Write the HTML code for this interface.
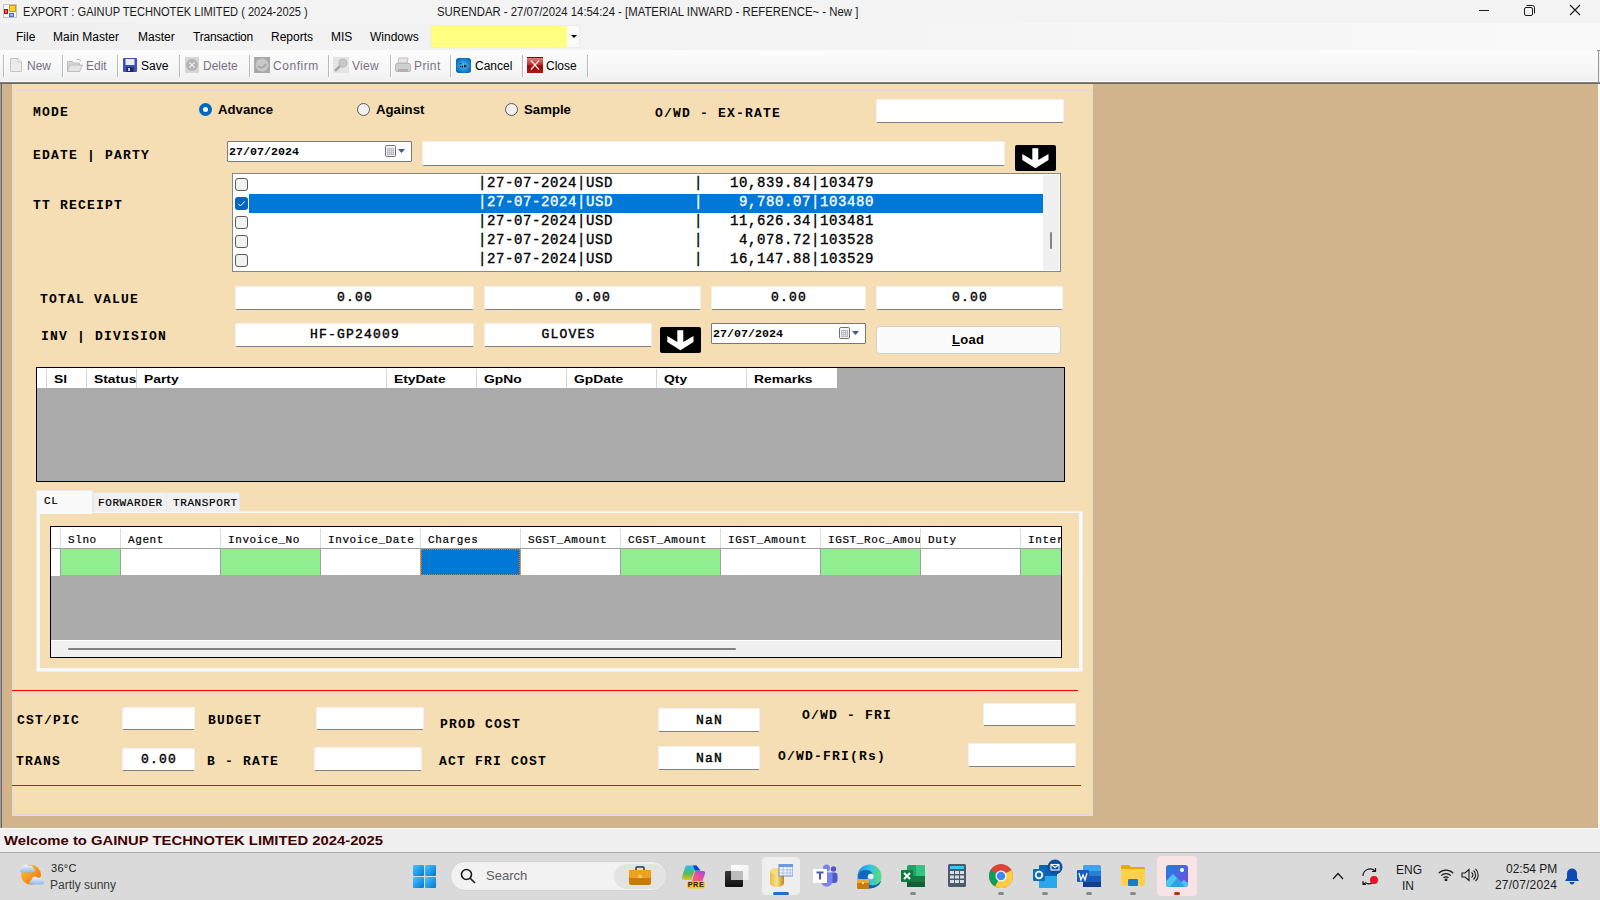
<!DOCTYPE html>
<html><head><meta charset="utf-8">
<style>
*{box-sizing:border-box}
html,body{margin:0;padding:0}
body{width:1600px;height:900px;overflow:hidden;position:relative;background:#f0f0f0;font-family:"Liberation Sans",sans-serif;color:#000}
.a{position:absolute}
.s12{font:12px/12px "Liberation Sans",sans-serif;white-space:pre}
.cm{font:bold 13px/15px "Liberation Mono",monospace;letter-spacing:1.2px;white-space:pre;color:#000}
.lr{font:normal 14px/15px "Liberation Mono",monospace;letter-spacing:0.6px;-webkit-text-stroke:0.35px currentColor;white-space:pre}
.tv{font:normal 13px/15px "Liberation Mono",monospace;letter-spacing:1.2px;-webkit-text-stroke:0.4px #000;white-space:pre;color:#000;padding-left:1.2px}
.cm12{font:normal 11px/12px "Liberation Mono",monospace;letter-spacing:0.6px;-webkit-text-stroke:0.2px #000;white-space:pre;color:#000}
.dt{font:bold 11.67px/12px "Liberation Mono",monospace;white-space:pre;color:#000}
.tb{position:absolute;background:#fff;border-top:1px solid #eef0f4;border-left:1px solid #eef0f4;border-right:1px solid #eef0f4;border-bottom:1px solid #808080;border-radius:2px}
.sep{position:absolute;top:55px;width:1px;height:22px;background:#b9b9b9;box-shadow:1px 0 0 #fff}
.gh{font:bold 11px/12px "Liberation Sans",sans-serif;transform:scaleX(1.26);transform-origin:0 0;white-space:pre}
.vl{position:absolute;width:1px;background:#d5d5d5}
.rl{font:bold 12px/12px "Liberation Sans",sans-serif;transform:scaleX(1.1);transform-origin:0 0;white-space:pre}
.chk{position:absolute;left:235px;width:13px;height:13px;border:1px solid #5a5a5a;border-radius:3px;background:#f1f1f1}
</style></head><body>

<!-- TITLE BAR -->
<div class="a" style="left:0;top:0;width:1600px;height:23px;background:#f3f3f3"></div>
<svg class="a" style="left:3px;top:4px" width="14" height="14" viewBox="0 0 14 14">
<rect x="0.5" y="0.5" width="13" height="13" fill="#f6f6f6" stroke="#c4c4c4"/>
<rect x="6" y="1" width="7" height="7" fill="#c89a10"/><rect x="7" y="2" width="5" height="5" fill="#ffd23a"/>
<rect x="1" y="5" width="4" height="5" fill="#b01010"/><rect x="2" y="6" width="2" height="3" fill="#f06060"/>
<rect x="6" y="9" width="5" height="4" fill="#3a72d8"/><rect x="7" y="10" width="3" height="2" fill="#90b8ff"/>
</svg>
<div class="a s12" style="left:23px;top:6px;transform:scaleX(0.925);transform-origin:0 0;color:#1a1a1a">EXPORT : GAINUP TECHNOTEK LIMITED ( 2024-2025 )</div>
<div class="a s12" style="left:437px;top:6px;transform:scaleX(0.946);transform-origin:0 0;color:#1a1a1a">SURENDAR - 27/07/2024 14:54:24 - [MATERIAL INWARD - REFERENCE~ - New ]</div>
<div class="a" style="left:1479px;top:10px;width:10px;height:1px;background:#1a1a1a"></div>
<svg class="a" style="left:1523px;top:4px" width="13" height="13" viewBox="0 0 13 13" fill="none" stroke="#1a1a1a" stroke-width="1">
<rect x="1.5" y="3.5" width="8" height="8" rx="1.5"/>
<path d="M3.5 1.5h6a2 2 0 0 1 2 2v6"/>
</svg>
<svg class="a" style="left:1569px;top:4px" width="12" height="12" viewBox="0 0 12 12" stroke="#1a1a1a" stroke-width="1.1">
<path d="M1 1L11 11M11 1L1 11"/>
</svg>

<!-- MENU BAR -->
<div class="a" style="left:0;top:23px;width:1600px;height:27px;background:linear-gradient(90deg,#f0f0f0 0%,#f3f3f3 40%,#f9f9f9 100%)"></div>
<div class="a s12" style="left:16px;top:31px;color:#000">File</div>
<div class="a s12" style="left:53px;top:31px;color:#000">Main Master</div>
<div class="a s12" style="left:138px;top:31px;color:#000">Master</div>
<div class="a s12" style="left:193px;top:31px;letter-spacing:-0.2px;color:#000">Transaction</div>
<div class="a s12" style="left:271px;top:31px;color:#000">Reports</div>
<div class="a s12" style="left:331px;top:31px;color:#000">MIS</div>
<div class="a s12" style="left:370px;top:31px;color:#000">Windows</div>
<div class="a" style="left:430px;top:25px;width:150px;height:23px;background:#fafafa;border:1px solid #ededed"></div>
<div class="a" style="left:431px;top:26px;width:136px;height:21px;background:#ffff80"></div>
<div class="a" style="left:571px;top:35px;width:0;height:0;border-left:3px solid transparent;border-right:3px solid transparent;border-top:3px solid #000"></div>

<!-- TOOLBAR -->
<div class="a" style="left:0;top:50px;width:1598px;height:32px;background:linear-gradient(180deg,#fcfcfc 0%,#f6f6f6 60%,#efefef 100%);border-radius:0 2px 0 0"></div>
<div class="a" style="left:0;top:81px;width:1600px;height:1px;background:#fafafa"></div>
<div class="a" style="left:0;top:82px;width:1600px;height:2px;background:linear-gradient(180deg,#8a8a8a,#5c5c5c)"></div>
<div class="sep" style="left:3px"></div>
<div class="sep" style="left:62px"></div>
<div class="sep" style="left:117px"></div>
<div class="sep" style="left:179px"></div>
<div class="sep" style="left:249px"></div>
<div class="sep" style="left:328px"></div>
<div class="sep" style="left:390px"></div>
<div class="sep" style="left:450px"></div>
<div class="sep" style="left:522px"></div>
<div class="sep" style="left:587px"></div>
<!-- icons -->
<svg class="a" style="left:10px;top:58px" width="12" height="14" viewBox="0 0 12 14"><path d="M0.5 0.5h7.5l3.5 3.5v9.5h-11z" fill="#ececec" stroke="#c4c4c4"/><path d="M8 0.5v3.5h3.5" fill="#f8f8f8" stroke="#c4c4c4"/></svg>
<div class="a s12" style="left:27px;top:60px;color:#7a7186">New</div>
<svg class="a" style="left:67px;top:58px" width="16" height="14" viewBox="0 0 16 14"><path d="M0.5 3.5h5l1 1.5h6v8.5h-12z" fill="#d8d8d8" stroke="#bdbdbd"/><path d="M2.5 7h13l-3 6.5h-12z" fill="#e4e4e4" stroke="#bdbdbd"/><path d="M10 1.5q3-1 4 2" stroke="#bdbdbd" fill="none"/></svg>
<div class="a s12" style="left:86px;top:60px;color:#7a7186">Edit</div>
<svg class="a" style="left:123px;top:58px" width="14" height="14" viewBox="0 0 14 14"><rect x="0" y="0" width="14" height="14" rx="1" fill="#3e4fb8"/><rect x="2.5" y="1" width="9" height="6" fill="#e8ecff"/><rect x="3.5" y="9" width="7" height="5" fill="#20286a"/><rect x="5" y="10" width="2" height="3" fill="#c8d0ff"/></svg>
<div class="a s12" style="left:141px;top:60px;color:#000">Save</div>
<svg class="a" style="left:185px;top:57px" width="14" height="16" viewBox="0 0 14 16"><rect x="0" y="0" width="14" height="16" fill="#d6d6d6"/><circle cx="7" cy="8" r="6" fill="#b4b4b4"/><path d="M4.5 5.5l5 5M9.5 5.5l-5 5" stroke="#eee" stroke-width="1.2"/></svg>
<div class="a s12" style="left:203px;top:60px;color:#7a7186">Delete</div>
<svg class="a" style="left:254px;top:57px" width="16" height="16" viewBox="0 0 16 16"><rect x="0" y="0" width="16" height="16" fill="#a8a8a8"/><circle cx="8" cy="8" r="6.5" fill="#c8c8c8"/><path d="M4 9q4 4 8-2" stroke="#a0a0a0" fill="none" stroke-width="1.5"/></svg>
<div class="a s12" style="left:273px;top:60px;letter-spacing:0.55px;color:#7a7186">Confirm</div>
<svg class="a" style="left:333px;top:57px" width="16" height="16" viewBox="0 0 16 16"><rect x="0" y="0" width="16" height="16" fill="#e4e4e4"/><circle cx="10" cy="6" r="4" fill="#c8c8c8" stroke="#b8b8b8"/><path d="M7 9l-5 5" stroke="#a8a8a8" stroke-width="2.5"/></svg>
<div class="a s12" style="left:352px;top:60px;letter-spacing:0.3px;color:#7a7186">View</div>
<svg class="a" style="left:395px;top:57px" width="16" height="16" viewBox="0 0 16 16"><path d="M4 1h9l-1 5H3z" fill="#e6e6e6" stroke="#c0c0c0"/><rect x="0.5" y="6.5" width="15" height="8" rx="1.5" fill="#cfcfcf" stroke="#b8b8b8"/><rect x="3" y="12" width="10" height="3" fill="#b0b0b0"/></svg>
<div class="a s12" style="left:414px;top:60px;letter-spacing:0.4px;color:#7a7186">Print</div>
<svg class="a" style="left:456px;top:58px" width="15" height="15" viewBox="0 0 15 15"><defs><radialGradient id="cg" cx="0.5" cy="0.5" r="0.6"><stop offset="0" stop-color="#4cc0f8"/><stop offset="1" stop-color="#0062b8"/></radialGradient></defs><rect x="0" y="0" width="15" height="15" rx="3" fill="url(#cg)"/><rect x="4" y="5" width="1.2" height="1.2" fill="#111"/><rect x="4" y="8" width="1.2" height="1.2" fill="#111"/><rect x="6" y="7.5" width="1" height="2" fill="#111"/><path d="M8 6.5L11 8L8 9.5z" fill="#111"/></svg>
<div class="a s12" style="left:475px;top:60px;color:#000">Cancel</div>
<svg class="a" style="left:527px;top:57px" width="16" height="16" viewBox="0 0 16 16"><defs><linearGradient id="xg" x1="0" y1="0" x2="0" y2="1"><stop offset="0" stop-color="#e88a8a"/><stop offset="0.5" stop-color="#c02828"/><stop offset="0.55" stop-color="#980808"/><stop offset="1" stop-color="#b01818"/></linearGradient></defs><rect x="0" y="0" width="16" height="16" fill="url(#xg)"/><rect x="0" y="0" width="16" height="1" fill="#5a1010"/><path d="M4 3.5l8 9M12 3.5l-8 9" stroke="#f2e6e6" stroke-width="1.3"/></svg>
<div class="a s12" style="left:546px;top:60px;color:#000">Close</div>

<!-- MDI AREA -->
<div class="a" style="left:0;top:84px;width:1600px;height:744px;background:#d2b48c"></div>
<div class="a" style="left:0;top:84px;width:1px;height:744px;background:#a0a0a0"></div>
<div class="a" style="left:1px;top:84px;width:1px;height:744px;background:#646464"></div>
<div class="a" style="left:1598px;top:84px;width:2px;height:744px;background:#fbfbfb"></div>
<div class="a" style="left:1598px;top:50px;width:1px;height:33px;background:#9a9a9a"></div>
<div class="a" style="left:1597px;top:50px;width:3px;height:1px;background:#8a8a8a"></div>
<div class="a" style="left:12px;top:84px;width:1081px;height:732px;background:#f5deb3"></div>
<div class="a" style="left:12px;top:90px;width:1081px;height:725px;border:1px solid #dcdcdc"></div>

<!-- FORM -->
<div class="a cm" style="left:33px;top:105px;">MODE</div>
<div class="a" style="left:199px;top:103px;width:13px;height:13px;border-radius:50%;background:#0067c0"></div>
<div class="a" style="left:203px;top:107px;width:5px;height:5px;border-radius:50%;background:#fff"></div>
<div class="a rl" style="left:218px;top:104px">Advance</div>
<div class="a" style="left:357px;top:103px;width:13px;height:13px;border-radius:50%;background:#f1f1f1;border:1px solid #5a5a5a"></div>
<div class="a rl" style="left:376px;top:104px">Against</div>
<div class="a" style="left:505px;top:103px;width:13px;height:13px;border-radius:50%;background:#f1f1f1;border:1px solid #5a5a5a"></div>
<div class="a rl" style="left:524px;top:104px">Sample</div>
<div class="a cm" style="left:655px;top:106px;">O/WD - EX-RATE</div>
<div class="tb" style="left:876px;top:99px;width:188px;height:24px;"></div>
<div class="a cm" style="left:33px;top:148px;">EDATE | PARTY</div>
<div class="a" style="left:227px;top:141px;width:185px;height:21px;border:1px solid #7a7a7a;background:#fff;border-radius:1px"></div>
<div class="a dt" style="left:229px;top:146px">27/07/2024</div>
<svg class="a" style="left:385px;top:145px" width="22" height="12" viewBox="0 0 22 12"><rect x="0.5" y="0.5" width="10" height="11" rx="1.2" fill="#f0f4fc" stroke="#786c6c"/><rect x="2" y="3" width="7" height="7" fill="#b6bac2"/><g fill="#fff"><rect x="2.8" y="3.8" width="1" height="1"/><rect x="4.8" y="3.8" width="1" height="1"/><rect x="6.8" y="3.8" width="1" height="1"/><rect x="2.8" y="5.8" width="1" height="1"/><rect x="4.8" y="5.8" width="1" height="1"/><rect x="6.8" y="5.8" width="1" height="1"/><rect x="2.8" y="7.8" width="1" height="1"/><rect x="4.8" y="7.8" width="1" height="1"/><rect x="6.8" y="7.8" width="1" height="1"/></g><path d="M13 4h7l-3.5 4z" fill="#3c5a8a"/></svg>
<div class="tb" style="left:422px;top:141px;width:583px;height:25px;"></div>
<div class="a" style="left:1015px;top:145px;width:41px;height:26px;background:#000;border-radius:2px"></div>
<svg class="a" style="left:1015px;top:145px" width="41" height="26" viewBox="0 0 41 26"><path d="M17.3 3.3H23.3V15L33.5 9V15L20.4 23.2L7.3 15V9L17.3 15Z" fill="#fff"/></svg>
<div class="a cm" style="left:33px;top:198px;">TT RECEIPT</div>
<div class="a" style="left:232px;top:173px;width:829px;height:99px;border:1px solid #828790;background:#fff"></div>
<div class="a" style="left:1043px;top:175px;width:16px;height:95px;background:#f0f0f0"></div>
<div class="a" style="left:1050px;top:232px;width:2px;height:17px;background:#858585;border-radius:1px"></div>
<div class="a" style="left:249px;top:194px;width:794px;height:19px;background:#0078d7"></div>
<div class="chk" style="top:178px"></div>
<div class="a lr" style="left:478px;top:176px;color:#000">|27-07-2024|USD         |   10,839.84|103479</div>
<div class="a" style="left:235px;top:197px;width:13px;height:13px;border-radius:3px;background:#0067c0"></div>
<svg class="a" style="left:235px;top:197px" width="13" height="13" viewBox="0 0 13 13"><path d="M3.2 6.8l2.2 2.2 4.4-4.6" stroke="#fff" stroke-width="1" fill="none"/></svg>
<div class="a lr" style="left:478px;top:195px;color:#fff">|27-07-2024|USD         |    9,780.07|103480</div>
<div class="chk" style="top:216px"></div>
<div class="a lr" style="left:478px;top:214px;color:#000">|27-07-2024|USD         |   11,626.34|103481</div>
<div class="chk" style="top:235px"></div>
<div class="a lr" style="left:478px;top:233px;color:#000">|27-07-2024|USD         |    4,078.72|103528</div>
<div class="chk" style="top:254px"></div>
<div class="a lr" style="left:478px;top:252px;color:#000">|27-07-2024|USD         |   16,147.88|103529</div>
<div class="a cm" style="left:40px;top:292px;">TOTAL VALUE</div>
<div class="tb" style="left:235px;top:286px;width:239px;height:24px;"></div>
<div class="a tv" style="left:235px;width:239px;text-align:center;top:290px">0.00</div>
<div class="tb" style="left:484px;top:286px;width:217px;height:24px;"></div>
<div class="a tv" style="left:484px;width:217px;text-align:center;top:290px">0.00</div>
<div class="tb" style="left:711px;top:286px;width:155px;height:24px;"></div>
<div class="a tv" style="left:711px;width:155px;text-align:center;top:290px">0.00</div>
<div class="tb" style="left:876px;top:286px;width:187px;height:24px;"></div>
<div class="a tv" style="left:876px;width:187px;text-align:center;top:290px">0.00</div>
<div class="a cm" style="left:41px;top:329px;">INV | DIVISION</div>
<div class="tb" style="left:235px;top:323px;width:239px;height:24px;"></div>
<div class="a tv" style="left:235px;width:239px;text-align:center;top:327px">HF-GP24009</div>
<div class="tb" style="left:484px;top:323px;width:168px;height:24px;"></div>
<div class="a tv" style="left:484px;width:168px;text-align:center;top:327px">GLOVES</div>
<div class="a" style="left:660px;top:327px;width:41px;height:26px;background:#000;border-radius:2px"></div>
<svg class="a" style="left:660px;top:327px" width="41" height="26" viewBox="0 0 41 26"><path d="M17.3 3.3H23.3V15L33.5 9V15L20.4 23.2L7.3 15V9L17.3 15Z" fill="#fff"/></svg>
<div class="a" style="left:711px;top:323px;width:155px;height:21px;border:1px solid #7a7a7a;background:#fff;border-radius:1px"></div>
<div class="a dt" style="left:713px;top:328px">27/07/2024</div>
<svg class="a" style="left:839px;top:327px" width="22" height="12" viewBox="0 0 22 12"><rect x="0.5" y="0.5" width="10" height="11" rx="1.2" fill="#f0f4fc" stroke="#786c6c"/><rect x="2" y="3" width="7" height="7" fill="#b6bac2"/><g fill="#fff"><rect x="2.8" y="3.8" width="1" height="1"/><rect x="4.8" y="3.8" width="1" height="1"/><rect x="6.8" y="3.8" width="1" height="1"/><rect x="2.8" y="5.8" width="1" height="1"/><rect x="4.8" y="5.8" width="1" height="1"/><rect x="6.8" y="5.8" width="1" height="1"/><rect x="2.8" y="7.8" width="1" height="1"/><rect x="4.8" y="7.8" width="1" height="1"/><rect x="6.8" y="7.8" width="1" height="1"/></g><path d="M13 4h7l-3.5 4z" fill="#3c5a8a"/></svg>
<div class="a" style="left:876px;top:326px;width:185px;height:28px;border:1px solid #d0d0d0;border-radius:4px;background:#fbfbfb"></div>
<div class="a" style="left:952px;top:333px;font:bold 13px/13px 'Liberation Sans';letter-spacing:0.3px;white-space:pre">Load</div>
<div class="a" style="left:952px;top:345px;width:8px;height:1px;background:#000"></div>
<div class="a" style="left:36px;top:367px;width:1029px;height:115px;background:#ababab;border:1px solid #000"></div>
<div class="a" style="left:37px;top:368px;width:800px;height:20px;background:#fff"></div>
<div class="vl" style="left:46px;top:369px;height:19px"></div>
<div class="vl" style="left:86px;top:369px;height:19px"></div>
<div class="vl" style="left:136px;top:369px;height:19px"></div>
<div class="vl" style="left:386px;top:369px;height:19px"></div>
<div class="vl" style="left:476px;top:369px;height:19px"></div>
<div class="vl" style="left:566px;top:369px;height:19px"></div>
<div class="vl" style="left:656px;top:369px;height:19px"></div>
<div class="vl" style="left:746px;top:369px;height:19px"></div>
<div class="a gh" style="left:54px;top:373px">Sl</div>
<div class="a gh" style="left:94px;top:373px">Status</div>
<div class="a gh" style="left:144px;top:373px">Party</div>
<div class="a gh" style="left:394px;top:373px">EtyDate</div>
<div class="a gh" style="left:484px;top:373px">GpNo</div>
<div class="a gh" style="left:574px;top:373px">GpDate</div>
<div class="a gh" style="left:664px;top:373px">Qty</div>
<div class="a gh" style="left:754px;top:373px">Remarks</div>
<div class="a" style="left:36px;top:511px;width:1047px;height:161px;background:#f9f9f9;border:1px solid #eceef2"></div>
<div class="a" style="left:40px;top:513px;width:1039px;height:155px;background:#f5deb3"></div>
<div class="a" style="left:36px;top:490px;width:57px;height:24px;background:#f9f9f9;border:1px solid #e8ebf0;border-bottom:none"></div>
<div class="a" style="left:93px;top:492px;width:74px;height:20px;background:#f0f0f0;border:1px solid #e6e6e6;border-bottom:none"></div>
<div class="a" style="left:166px;top:492px;width:74px;height:20px;background:#f0f0f0;border:1px solid #e6e6e6;border-bottom:none"></div>
<div class="a cm12" style="left:44px;top:495px">CL</div>
<div class="a cm12" style="left:98px;top:497px">FORWARDER</div>
<div class="a cm12" style="left:173px;top:497px">TRANSPORT</div>
<div class="a" style="left:50px;top:526px;width:1012px;height:132px;background:#ababab;border:1px solid #000"></div>
<div class="a" style="left:51px;top:527px;width:1010px;height:22px;background:#fff"></div>
<div class="a" style="left:51px;top:548px;width:1010px;height:1px;background:#a0a0a0"></div>
<div class="a" style="left:51px;top:549px;width:10px;height:27px;background:#fff"></div>
<div class="a" style="left:61px;top:549px;width:99px;height:26px;background:#90ee90"></div>
<div class="a" style="left:60px;top:529px;width:1px;height:19px;background:#dcdcdc"></div><div class="a" style="left:60px;top:549px;width:1px;height:27px;background:#a0a0a0"></div>
<div class="a cm12" style="left:68px;top:534px;overflow:hidden;width:92px">Slno</div>
<div class="a" style="left:121px;top:549px;width:99px;height:26px;background:#fff"></div>
<div class="a" style="left:120px;top:529px;width:1px;height:19px;background:#dcdcdc"></div><div class="a" style="left:120px;top:549px;width:1px;height:27px;background:#a0a0a0"></div>
<div class="a cm12" style="left:128px;top:534px;overflow:hidden;width:92px">Agent</div>
<div class="a" style="left:221px;top:549px;width:99px;height:26px;background:#90ee90"></div>
<div class="a" style="left:220px;top:529px;width:1px;height:19px;background:#dcdcdc"></div><div class="a" style="left:220px;top:549px;width:1px;height:27px;background:#a0a0a0"></div>
<div class="a cm12" style="left:228px;top:534px;overflow:hidden;width:92px">Invoice_No</div>
<div class="a" style="left:321px;top:549px;width:99px;height:26px;background:#fff"></div>
<div class="a" style="left:320px;top:529px;width:1px;height:19px;background:#dcdcdc"></div><div class="a" style="left:320px;top:549px;width:1px;height:27px;background:#a0a0a0"></div>
<div class="a cm12" style="left:328px;top:534px;overflow:hidden;width:92px">Invoice_Date</div>
<div class="a" style="left:421px;top:549px;width:99px;height:26px;background:#0078d7"></div>
<div class="a" style="left:420px;top:529px;width:1px;height:19px;background:#dcdcdc"></div><div class="a" style="left:420px;top:549px;width:1px;height:27px;background:#a0a0a0"></div>
<div class="a cm12" style="left:428px;top:534px;overflow:hidden;width:92px">Charges</div>
<div class="a" style="left:521px;top:549px;width:99px;height:26px;background:#fff"></div>
<div class="a" style="left:520px;top:529px;width:1px;height:19px;background:#dcdcdc"></div><div class="a" style="left:520px;top:549px;width:1px;height:27px;background:#a0a0a0"></div>
<div class="a cm12" style="left:528px;top:534px;overflow:hidden;width:92px">SGST_Amount</div>
<div class="a" style="left:621px;top:549px;width:99px;height:26px;background:#90ee90"></div>
<div class="a" style="left:620px;top:529px;width:1px;height:19px;background:#dcdcdc"></div><div class="a" style="left:620px;top:549px;width:1px;height:27px;background:#a0a0a0"></div>
<div class="a cm12" style="left:628px;top:534px;overflow:hidden;width:92px">CGST_Amount</div>
<div class="a" style="left:721px;top:549px;width:99px;height:26px;background:#fff"></div>
<div class="a" style="left:720px;top:529px;width:1px;height:19px;background:#dcdcdc"></div><div class="a" style="left:720px;top:549px;width:1px;height:27px;background:#a0a0a0"></div>
<div class="a cm12" style="left:728px;top:534px;overflow:hidden;width:92px">IGST_Amount</div>
<div class="a" style="left:821px;top:549px;width:99px;height:26px;background:#90ee90"></div>
<div class="a" style="left:820px;top:529px;width:1px;height:19px;background:#dcdcdc"></div><div class="a" style="left:820px;top:549px;width:1px;height:27px;background:#a0a0a0"></div>
<div class="a cm12" style="left:828px;top:534px;overflow:hidden;width:92px">IGST_Roc_Amou</div>
<div class="a" style="left:921px;top:549px;width:99px;height:26px;background:#fff"></div>
<div class="a" style="left:920px;top:529px;width:1px;height:19px;background:#dcdcdc"></div><div class="a" style="left:920px;top:549px;width:1px;height:27px;background:#a0a0a0"></div>
<div class="a cm12" style="left:928px;top:534px;overflow:hidden;width:92px">Duty</div>
<div class="a" style="left:1021px;top:549px;width:40px;height:26px;background:#90ee90"></div>
<div class="a" style="left:1020px;top:529px;width:1px;height:19px;background:#dcdcdc"></div><div class="a" style="left:1020px;top:549px;width:1px;height:27px;background:#a0a0a0"></div>
<div class="a cm12" style="left:1028px;top:534px;overflow:hidden;width:33px">Inter</div>
<div class="a" style="left:421px;top:549px;width:99px;height:26px;border:1px dotted #c08040"></div>
<div class="a" style="left:51px;top:640px;width:1010px;height:17px;background:#f0f0f0;border-top:1px solid #fff"></div>
<div class="a" style="left:68px;top:648px;width:668px;height:2px;background:#808080;border-radius:1px"></div>
<div class="a" style="left:12px;top:690px;width:1066px;height:1px;background:#ff0000"></div>
<div class="a" style="left:12px;top:785px;width:1069px;height:1px;background:#ff0000"></div>
<div class="a cm" style="left:17px;top:713px;">CST/PIC</div>
<div class="tb" style="left:122px;top:707px;width:73px;height:23px;"></div>
<div class="a cm" style="left:208px;top:713px;">BUDGET</div>
<div class="tb" style="left:316px;top:707px;width:108px;height:23px;"></div>
<div class="a cm" style="left:440px;top:717px;">PROD COST</div>
<div class="tb" style="left:658px;top:708px;width:102px;height:24px;"></div>
<div class="a tv" style="left:658px;width:102px;text-align:center;top:713px">NaN</div>
<div class="a cm" style="left:802px;top:708px;">O/WD - FRI</div>
<div class="tb" style="left:983px;top:703px;width:93px;height:23px;"></div>
<div class="a cm" style="left:16px;top:754px;">TRANS</div>
<div class="tb" style="left:122px;top:748px;width:73px;height:23px;"></div>
<div class="a tv" style="left:122px;width:73px;text-align:center;top:752px">0.00</div>
<div class="a cm" style="left:207px;top:754px;">B - RATE</div>
<div class="tb" style="left:314px;top:747px;width:108px;height:24px;"></div>
<div class="a cm" style="left:439px;top:754px;">ACT FRI COST</div>
<div class="tb" style="left:658px;top:746px;width:102px;height:24px;"></div>
<div class="a tv" style="left:658px;width:102px;text-align:center;top:751px">NaN</div>
<div class="a cm" style="left:778px;top:749px;">O/WD-FRI(Rs)</div>
<div class="tb" style="left:968px;top:743px;width:108px;height:24px;"></div>

<!-- STATUS BAR -->
<div class="a" style="left:0;top:828px;width:1600px;height:1px;background:#fdfdfd"></div>
<div class="a" style="left:0;top:829px;width:1600px;height:23px;background:#f0f0f0"></div>
<div class="a" style="left:4px;top:834px;font:bold 13px/13px 'Liberation Sans';transform:scaleX(1.14);transform-origin:0 0;color:#400000;white-space:pre">Welcome to GAINUP TECHNOTEK LIMITED 2024-2025</div>

<!-- TASKBAR -->
<div class="a" style="left:0;top:852px;width:1600px;height:1px;background:#a8a8a8"></div>
<div class="a" style="left:0;top:853px;width:1600px;height:47px;background:#dadada"></div>

<!-- weather -->
<svg class="a" style="left:18px;top:862px" width="27" height="25" viewBox="0 0 27 25">
<defs><linearGradient id="sun" x1="0" y1="0" x2="1" y2="1"><stop offset="0" stop-color="#f9c833"/><stop offset="1" stop-color="#f26a06"/></linearGradient>
<linearGradient id="cl" x1="0" y1="0" x2="0" y2="1"><stop offset="0" stop-color="#f2f7fd"/><stop offset="1" stop-color="#8fb8ea"/></linearGradient></defs>
<circle cx="13" cy="12.8" r="10" fill="url(#sun)"/>
<path d="M2.5 10.5a2.8 2.8 0 0 1 1.5-4.2a3.6 3.6 0 0 1 6.5-2.2a3 3 0 0 1 4.8 2.2a2.2 2.2 0 0 1 0 4.2z" fill="url(#cl)"/>
<path d="M12 22.5a2.8 2.8 0 0 1 1.5-4.2a3.6 3.6 0 0 1 6.5-2.2a3 3 0 0 1 4.8 2.2a2.2 2.2 0 0 1 0 4.2z" fill="url(#cl)"/>
</svg>
<div class="a" style="left:51px;top:863px;font:11px/11px 'Liberation Sans';letter-spacing:0.3px;color:#1a1a1a;white-space:pre">36°C</div>
<div class="a" style="left:50px;top:879px;font:12px/12px 'Liberation Sans';color:#3a3a3a;white-space:pre">Partly sunny</div>
<!-- start -->
<svg class="a" style="left:413px;top:865px" width="23" height="23" viewBox="0 0 23 23">
<defs><linearGradient id="win" x1="0" y1="0" x2="1" y2="1"><stop offset="0" stop-color="#4cc2ff"/><stop offset="1" stop-color="#0078d4"/></linearGradient></defs>
<rect x="0" y="0" width="11" height="11" rx="1" fill="url(#win)"/><rect x="12" y="0" width="11" height="11" rx="1" fill="url(#win)"/>
<rect x="0" y="12" width="11" height="11" rx="1" fill="url(#win)"/><rect x="12" y="12" width="11" height="11" rx="1" fill="url(#win)"/>
</svg>
<!-- search -->
<div class="a" style="left:450px;top:861px;width:217px;height:30px;border-radius:15px;background:#f2f2f2;border:1px solid #d3d3d3"></div>
<svg class="a" style="left:460px;top:868px" width="16" height="16" viewBox="0 0 16 16" fill="none" stroke="#1a1a1a" stroke-width="1.6"><circle cx="6.5" cy="6.5" r="5"/><path d="M10.2 10.2L15 15"/></svg>
<div class="a" style="left:486px;top:869px;font:13px/13px 'Liberation Sans';color:#5c5c5c;white-space:pre">Search</div>
<div class="a" style="left:614px;top:864px;width:52px;height:25px;border-radius:13px;background:#e3e3e3"></div>
<svg class="a" style="left:629px;top:866px" width="22" height="19" viewBox="0 0 22 19"><path d="M7 4V2a1 1 0 0 1 1-1h6a1 1 0 0 1 1 1v2" stroke="#333" stroke-width="1.5" fill="none"/><rect x="0" y="4" width="22" height="15" rx="2" fill="#c87a10"/><rect x="0" y="4" width="22" height="8" rx="2" fill="#f0a020"/><rect x="9.5" y="9" width="3" height="3" fill="#ffe060"/></svg>
<!-- copilot -->
<svg class="a" style="left:681px;top:864px" width="25" height="25" viewBox="0 0 25 25">
<defs><linearGradient id="copl" x1="0" y1="0" x2="0" y2="1"><stop offset="0" stop-color="#1ec4fa"/><stop offset="0.55" stop-color="#58b85a"/><stop offset="1" stop-color="#e0c41a"/></linearGradient>
<linearGradient id="copr" x1="0" y1="1" x2="1" y2="0"><stop offset="0" stop-color="#f46a6a"/><stop offset="0.5" stop-color="#e8509a"/><stop offset="1" stop-color="#a040f4"/></linearGradient></defs>
<path d="M6 1.5H15.5L19 6.5H13.5L10.5 16H3Q0.5 16 1 13L4 3.5Q4.5 1.5 6 1.5z" fill="url(#copl)"/>
<path d="M12 1.5H15.5L19.5 6.5H14z" fill="#0b3fd0"/>
<path d="M14 7H22Q24.5 7 24 9.5L21.5 17H11z" fill="url(#copr)"/>
<rect x="6" y="17" width="18" height="7.5" rx="3" fill="#ffc20a"/>
<text x="15" y="23.2" font-family="Liberation Sans" font-weight="bold" font-size="7.2" text-anchor="middle" fill="#1a1a1a" letter-spacing="0.6">PRE</text>
</svg>
<!-- task view -->
<svg class="a" style="left:724px;top:864px" width="25" height="24" viewBox="0 0 25 24">
<defs><linearGradient id="tvw" x1="0" y1="0" x2="1" y2="1"><stop offset="0" stop-color="#ffffff"/><stop offset="1" stop-color="#ececec"/></linearGradient>
<linearGradient id="tvb" x1="0" y1="0" x2="0" y2="1"><stop offset="0" stop-color="#3a3a3a"/><stop offset="1" stop-color="#111"/></linearGradient></defs>
<rect x="7" y="1" width="17.5" height="15" rx="1" fill="url(#tvw)"/>
<rect x="1" y="7" width="18" height="16" rx="1.2" fill="url(#tvb)"/>
<rect x="7" y="7" width="12" height="9" fill="#bcbcbc"/>
</svg>
<!-- active app -->
<div class="a" style="left:762px;top:857px;width:38px;height:38px;border-radius:4px;background:#eeeeee"></div>
<div class="a" style="left:773px;top:892px;width:16px;height:3px;border-radius:2px;background:#1e6ed6"></div>
<svg class="a" style="left:770px;top:864px" width="23" height="23" viewBox="0 0 23 23">
<defs><linearGradient id="db" x1="0" y1="0" x2="1" y2="0"><stop offset="0" stop-color="#e8c04a"/><stop offset="0.5" stop-color="#f8e08a"/><stop offset="1" stop-color="#b8861a"/></linearGradient></defs>
<path d="M0 7v12c0 2 3 4 7 4s7-2 7-4V7z" fill="url(#db)"/>
<ellipse cx="7" cy="7" rx="7" ry="3" fill="#f6dc7a"/>
<rect x="9" y="0" width="14" height="12" fill="#eef4ff" stroke="#5a7ac0" stroke-width="0.8"/>
<rect x="9" y="0" width="14" height="3" fill="#6a9ae6"/>
<path d="M9 6h14M9 9h14M13 3v9M17 3v9M20 3v9" stroke="#8aa8e0" stroke-width="0.6"/>
</svg>
<!-- teams -->
<svg class="a" style="left:813px;top:864px" width="25" height="23" viewBox="0 0 25 23">
<circle cx="20.5" cy="5" r="2.7" fill="#5059c9"/>
<rect x="16.5" y="8.5" width="8" height="10.5" rx="3" fill="#5059c9"/>
<circle cx="13.5" cy="4" r="3.5" fill="#7b83eb"/>
<path d="M8 8.5h11.5v8.5a5.75 5.75 0 0 1-11.5 0z" fill="#7b83eb"/>
<rect x="0" y="5" width="14" height="14" fill="#ffffff"/>
<path d="M3.5 8.5h7M7 8.5v7" stroke="#4b53bc" stroke-width="2"/>
</svg>
<!-- edge -->
<svg class="a" style="left:857px;top:864px" width="25" height="25" viewBox="0 0 25 25">
<defs><linearGradient id="ed" x1="0" y1="0.5" x2="1" y2="0.5"><stop offset="0" stop-color="#1a86d8"/><stop offset="0.45" stop-color="#32bdf0"/><stop offset="1" stop-color="#58e070"/></linearGradient></defs>
<circle cx="12.5" cy="12.5" r="12" fill="url(#ed)"/>
<path d="M1 13Q2 6 9 6Q14 6 15.5 10Q12 9 10.5 12Q9.5 16 13 19Q6 20 1 13z" fill="#1166c4"/>
<circle cx="13.8" cy="12.5" r="2.8" fill="#e6eef2"/>
<path d="M11 20Q18 24 24.5 16.5Q22 24 13 24.5Q6 24 3 20z" fill="#1a5cb0"/>
<rect x="0" y="15" width="12" height="10" rx="1" fill="#c87a14"/><rect x="0" y="15" width="12" height="4" fill="#f0a830"/><rect x="5" y="18" width="2" height="2" fill="#ffe060"/>
</svg>
<!-- excel -->
<svg class="a" style="left:901px;top:865px" width="24" height="22" viewBox="0 0 24 22">
<rect x="6" y="0" width="18" height="22" rx="1.5" fill="#21a366"/>
<rect x="15" y="0" width="9" height="11" fill="#33c481"/><rect x="6" y="11" width="18" height="6" fill="#107c41"/><rect x="6" y="17" width="18" height="5" fill="#185c37"/>
<rect x="0" y="5" width="12" height="12" rx="1" fill="#107c41"/>
<path d="M3 8l6 6M9 8l-6 6" stroke="#fff" stroke-width="1.8"/>
</svg>
<div class="a" style="left:910px;top:892px;width:6px;height:3px;border-radius:2px;background:#8a8a8a"></div>
<!-- calculator -->
<svg class="a" style="left:948px;top:864px" width="18" height="23" viewBox="0 0 18 23">
<rect x="0" y="0" width="18" height="23" rx="1.5" fill="#4a5a6a"/>
<rect x="2" y="2" width="14" height="3" fill="#3cc8f0"/>
<g fill="#d8dde2"><rect x="2" y="7" width="4" height="3"/><rect x="7" y="7" width="4" height="3"/><rect x="12" y="7" width="4" height="3"/><rect x="2" y="11.5" width="4" height="3"/><rect x="7" y="11.5" width="4" height="3"/><rect x="12" y="11.5" width="4" height="3"/><rect x="2" y="16" width="4" height="3"/><rect x="7" y="16" width="4" height="3"/><rect x="12" y="16" width="4" height="3"/></g>
</svg>
<!-- chrome -->
<svg class="a" style="left:989px;top:864px" width="24" height="24" viewBox="0 0 24 24">
<circle cx="12" cy="12" r="12" fill="#db4437"/>
<path d="M12 12L1.6 6A12 12 0 0 0 6 22.4z" fill="#0f9d58"/>
<path d="M12 12L6 22.4A12 12 0 0 0 24 12h-12z" fill="#ffcd40"/>
<path d="M12 12h12A12 12 0 0 0 22.4 6z" fill="#ffcd40"/>
<circle cx="12" cy="12" r="5.5" fill="#fff"/><circle cx="12" cy="12" r="4.3" fill="#4285f4"/>
</svg>
<div class="a" style="left:998px;top:892px;width:6px;height:3px;border-radius:2px;background:#8a8a8a"></div>
<!-- outlook -->
<svg class="a" style="left:1033px;top:859px" width="30" height="29" viewBox="0 0 30 29">
<rect x="6" y="6" width="18" height="23" rx="1" fill="#0a64b4"/>
<rect x="6" y="17" width="18" height="12" fill="#28a8ea"/>
<rect x="0" y="10" width="12" height="12" rx="1" fill="#0f6cbd"/>
<circle cx="6" cy="16" r="3.3" fill="none" stroke="#fff" stroke-width="1.8"/>
<circle cx="22" cy="8" r="7.5" fill="#0f4fa0"/>
<rect x="18" y="5.5" width="8" height="5.5" fill="none" stroke="#fff" stroke-width="1.1"/><path d="M18 5.5l4 3 4-3" stroke="#fff" stroke-width="1.1" fill="none"/>
</svg>
<div class="a" style="left:1042px;top:892px;width:6px;height:3px;border-radius:2px;background:#8a8a8a"></div>
<!-- word -->
<svg class="a" style="left:1077px;top:865px" width="24" height="22" viewBox="0 0 24 22">
<rect x="6" y="0" width="18" height="22" rx="1.5" fill="#41a5ee"/>
<rect x="6" y="6" width="18" height="5" fill="#2b7cd3"/><rect x="6" y="11" width="18" height="6" fill="#185abd"/><rect x="6" y="17" width="18" height="5" fill="#103f91"/>
<rect x="0" y="5" width="12" height="12" rx="1" fill="#185abd"/>
<path d="M2 8l2 7 2-5 2 5 2-7" stroke="#fff" stroke-width="1.3" fill="none"/>
</svg>
<div class="a" style="left:1086px;top:892px;width:6px;height:3px;border-radius:2px;background:#8a8a8a"></div>
<!-- explorer -->
<svg class="a" style="left:1121px;top:865px" width="24" height="21" viewBox="0 0 24 21">
<path d="M0 1a1 1 0 0 1 1-1h7l2 2h13a1 1 0 0 1 1 1v3H0z" fill="#e8a80c"/>
<rect x="0" y="4" width="24" height="17" rx="1" fill="#ffd04a"/>
<rect x="7" y="14" width="10" height="7" rx="1" fill="#1a7ad0"/>
</svg>
<div class="a" style="left:1130px;top:892px;width:6px;height:3px;border-radius:2px;background:#8a8a8a"></div>
<!-- photos (active) -->
<div class="a" style="left:1157px;top:856px;width:40px;height:40px;border-radius:4px;background:#f8e4e4"></div>
<svg class="a" style="left:1166px;top:865px" width="22" height="22" viewBox="0 0 22 22">
<defs><linearGradient id="ph" x1="0" y1="0" x2="1" y2="1"><stop offset="0" stop-color="#1d7fe0"/><stop offset="1" stop-color="#7a4ae0"/></linearGradient></defs>
<rect x="0" y="0" width="22" height="22" rx="3" fill="url(#ph)"/>
<path d="M0 16l7-7 8 8 3-2 4 3v1a3 3 0 0 1-3 3H3a3 3 0 0 1-3-3z" fill="#48c6f4"/>
<path d="M4 22l7-9 8 9z" fill="#2aa4e8"/>
<circle cx="16" cy="5" r="2" fill="#fff"/>
</svg>
<div class="a" style="left:1174px;top:892px;width:6px;height:3px;border-radius:2px;background:#c42b1c"></div>
<!-- tray -->
<svg class="a" style="left:1332px;top:872px" width="12" height="8" viewBox="0 0 12 8"><path d="M1 7l5-5.5L11 7" stroke="#1a1a1a" stroke-width="1.3" fill="none"/></svg>
<svg class="a" style="left:1361px;top:867px" width="19" height="19" viewBox="0 0 19 19">
<path d="M2 9a7 7 0 0 1 12-5" stroke="#1a1a1a" stroke-width="1.2" fill="none"/><path d="M14.5 1v3.5H11" stroke="#1a1a1a" stroke-width="1.2" fill="none"/>
<path d="M15 11a7 7 0 0 1-10 5" stroke="#1a1a1a" stroke-width="1.2" fill="none"/><path d="M2 17.5l3-2M2 14v3.5h3" stroke="#1a1a1a" stroke-width="1.2" fill="none"/>
<circle cx="13" cy="13" r="4" fill="#e81123"/>
</svg>
<div class="a" style="left:1396px;top:864px;font:12px/12px 'Liberation Sans';color:#1a1a1a;white-space:pre">ENG</div>
<div class="a" style="left:1402px;top:880px;font:12px/12px 'Liberation Sans';color:#1a1a1a;white-space:pre">IN</div>
<svg class="a" style="left:1438px;top:869px" width="16" height="12" viewBox="0 0 16 12" fill="none" stroke="#1a1a1a" stroke-width="1.2">
<path d="M0.8 4.2a10 10 0 0 1 14.4 0"/><path d="M3.2 6.6a6.6 6.6 0 0 1 9.6 0"/><path d="M5.6 9a3.2 3.2 0 0 1 4.8 0"/><circle cx="8" cy="11" r="0.8" fill="#1a1a1a"/>
</svg>
<svg class="a" style="left:1461px;top:868px" width="18" height="14" viewBox="0 0 18 14" fill="none" stroke="#1a1a1a" stroke-width="1.1">
<path d="M1 5h3l4-3.5v11L4 9H1z"/><path d="M10.5 4.5a3 3 0 0 1 0 5"/><path d="M12.5 2.5a6 6 0 0 1 0 9"/><path d="M14.5 0.8a8.5 8.5 0 0 1 0 12.4"/>
</svg>
<div class="a" style="left:1506px;top:863px;font:12px/12px 'Liberation Sans';color:#1a1a1a;white-space:pre">02:54 PM</div>
<div class="a" style="left:1495px;top:879px;font:12px/12px 'Liberation Sans';letter-spacing:0.2px;color:#1a1a1a;white-space:pre">27/07/2024</div>
<svg class="a" style="left:1565px;top:868px" width="14" height="17" viewBox="0 0 14 17">
<path d="M7 0.5a5 5 0 0 1 5 5v4.5l2 3H0l2-3V5.5a5 5 0 0 1 5-5z" fill="#0b49b4"/><path d="M4.5 14a2.5 2.5 0 0 0 5 0z" fill="#0b49b4"/>
</svg>

</body></html>
